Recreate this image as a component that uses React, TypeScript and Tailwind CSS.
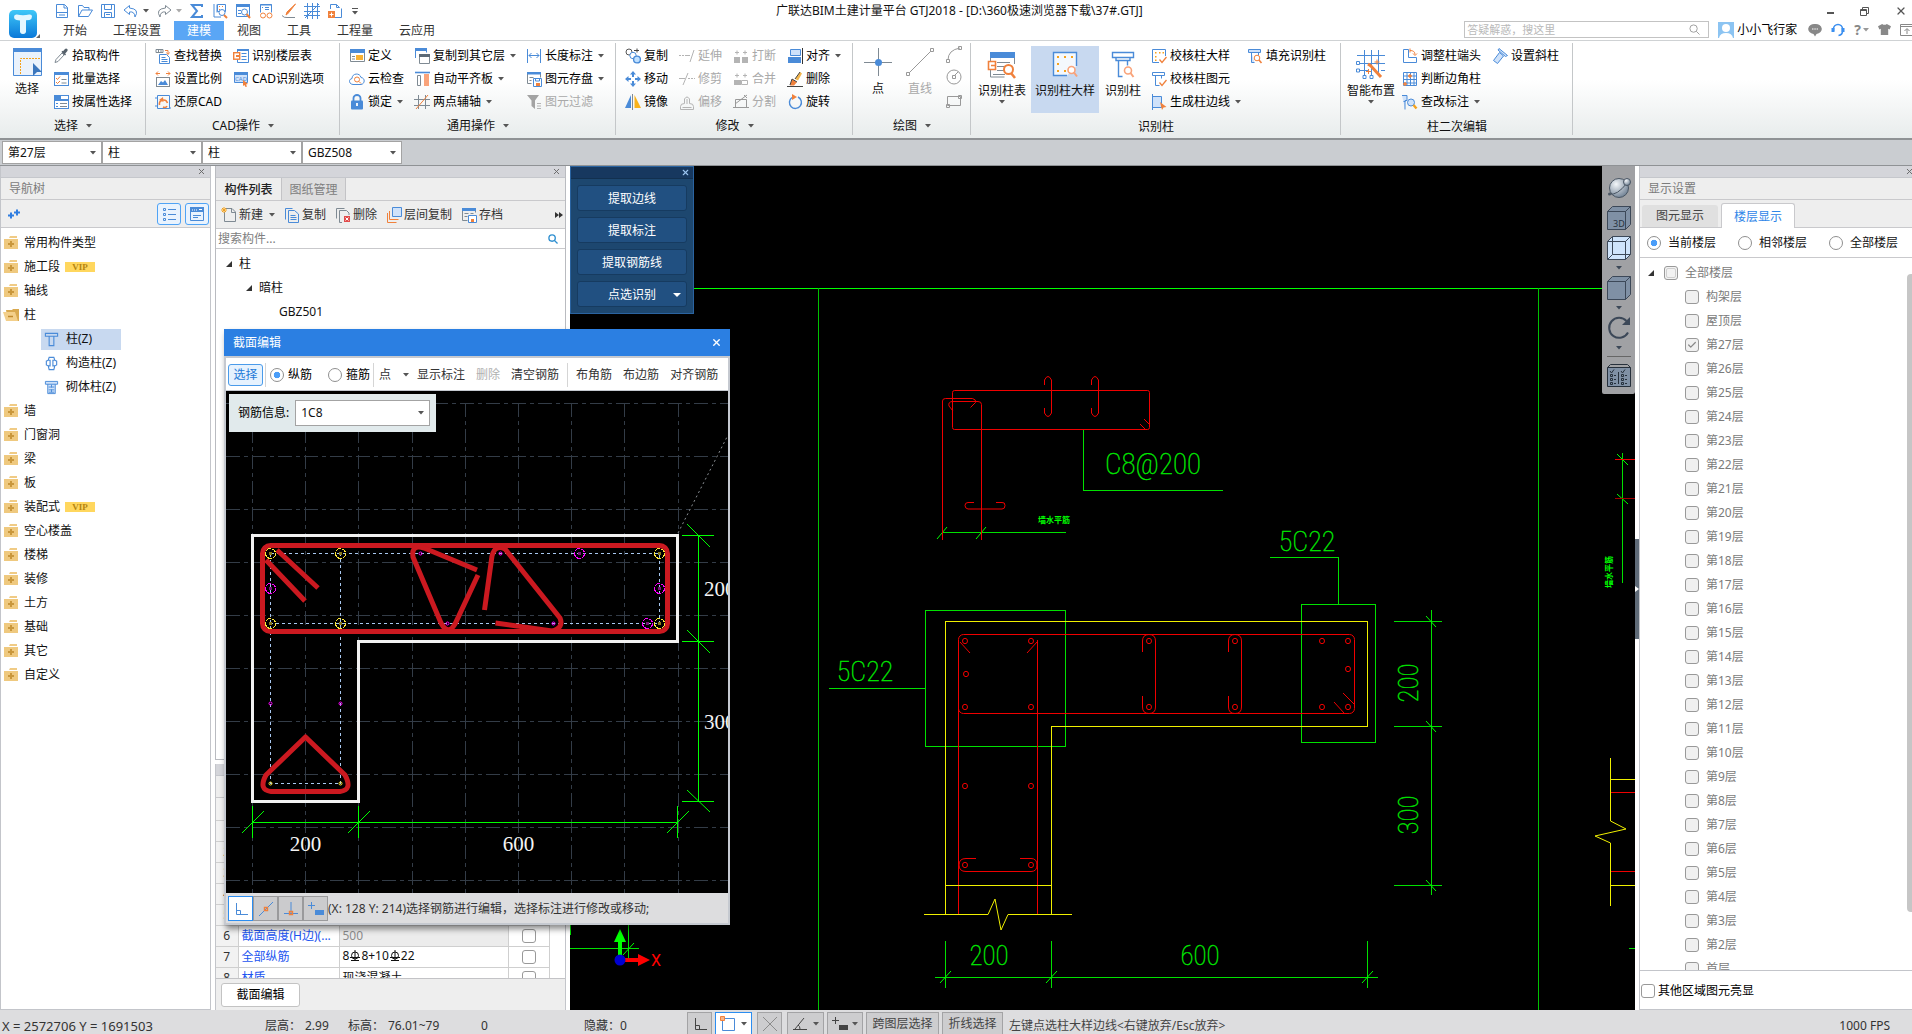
import type { ReactNode } from "react";
import { Check, X } from "lucide-react";

const B = "#4a8bd8";
const O = "#f0813c";
const G = "#7f8a93";
const D = "#b4b4b4";
const LB = "#cfe2fa";

/* 16x16 glyphs of the ribbon and the tool bars */
const glyphs: Record<string, ReactNode> = {
  pick: (
    <>
      <path d="M2 14.5l1-3 6-6.5 2 2-6 6.5z" stroke={G} fill="#fff" />
      <path d="M8.5 4l3.5 3.5 1-1-.8-1 2-2.2a1.5 1.5 0 0 0-2.2-2.2L10 3.300l-.8-.5z" fill="#56616b" />
    </>
  ),
  batch: (
    <>
      <rect x="1.500" y="1.500" width="14" height="13" stroke={B} fill="#fff" />
      <path d="M1 1h15v3H1z" fill={B} />
      <path d="M3 7l1.500 1.500L7 5.500M3 11l1.500 1.500L7 10" stroke={O} />
      <path d="M8.500 8.500h5M8.500 12h5" stroke={G} />
    </>
  ),
  attr: (
    <>
      <rect x="1.500" y="1.500" width="14" height="13" stroke={B} fill="#fff" />
      <path d="M1 1h7v4h8v2H1z" fill={B} />
      <path d="M7 9.500h7M7 12.500h7" stroke={G} />
      <path d="M3 9h2v1H3zM3 12h2v1H3z" fill={B} />
    </>
  ),
  find: (
    <>
      <path d="M1 1.500h7v3H1zM3.500 1.500v3M6 1.500v3" stroke={G} />
      <path d="M10 2.500h3v3M11.500 4.500l1.500 2 1.500-2" stroke={O} />
      <path d="M4.500 6.500h7l3 3v6h-10zM6.500 9.500h4M6.500 11.500h6M6.500 13.500h6" stroke={B} />
    </>
  ),
  scale: (
    <>
      <path d="M1 2.500h4M3 .5l-2 2 2 2M15 2.500h-4M13 .5l2 2-2 2" stroke={O} />
      <rect x="1.500" y="6.500" width="13" height="9" stroke={G} fill="#fff" />
      <path d="M3 14l3-4 2 1.500L10 9l3 5z" fill={B} />
    </>
  ),
  restore: (
    <>
      <path d="M2.500 1.500h12v13h-12zM0 4h2M0 12h2M14 14h2" stroke={B} />
      <path d="M4.500 11c-1-5 6-7 8-2M12 12c-1 2-3 1.500-4 1" stroke={O} strokeWidth="1.600" />
      <path d="M8 3L4 6l4.500 2z" fill={O} />
    </>
  ),
  floors: (
    <>
      <path d="M4.500 1.500h11v13h-11zM8.500 5.500h5M8.500 8.500h5M8.500 11.500h5" stroke={B} />
      <path d="M4 1h12v2H4z" fill={B} />
      <rect x=".7" y="4.700" width="6" height="6.500" stroke={O} strokeWidth="1.400" fill="#fff" />
      <path d="M3 7h3v2H3z" fill={O} />
    </>
  ),
  cadopt: (
    <>
      <path d="M1.500 2.500h13v9h-13z" stroke={B} fill={LB} />
      <path d="M1 1h14v3H1z" fill={B} />
      <text x="2" y="10" fontSize="6" fill={B} stroke="none">CAD</text>
      <path d="M10 9l5 4-2 .5 1 2-1.500.5-1-2-1.500 1z" fill={O} />
    </>
  ),
  define: (
    <>
      <path d="M1.500 1.500h14v12h-14z" stroke={G} fill="#fff" />
      <path d="M1 1h15v4H1z" fill={B} />
      <path d="M7 7h7v5H7z" fill="#f9b233" />
      <path d="M3 8.500h3M3 11h3" stroke={G} />
    </>
  ),
  cloud: (
    <>
      <path d="M4 13.500C-.5 13-.5 8 3 7.500 3 2 11 1.500 12 6.500c4.500.5 4 6.500 0 7z" stroke={B} />
      <circle cx="8" cy="8.500" r="2.500" stroke={O} />
      <path d="M10 10.500l2 2" stroke={O} />
    </>
  ),
  lock: (
    <>
      <path d="M4.500 7V4a3.500 3 0 0 1 7 0v3" stroke={B} strokeWidth="1.800" />
      <rect x="2" y="6.500" width="12" height="9" rx="1" fill={B} />
      <path d="M8 9v3" stroke="#fff" strokeWidth="1.800" />
    </>
  ),
  copyto: (
    <>
      <path d="M1.500 10V.5h11v4" stroke={B} />
      <path d="M1 0h12v3H1z" fill={B} />
      <path d="M5.500 6.500h10v9h-10z" stroke={G} fill="#fff" />
      <path d="M5 6h11v3H5z" fill="#5d6a76" />
    </>
  ),
  slab: (
    <>
      <path d="M1 1.500h15" stroke={B} strokeWidth="1.600" />
      <path d="M3.500 4.500h3v10h-3z" stroke={G} />
      <path d="M10 3h5v12h-5z" fill="#f9a37a" />
    </>
  ),
  axis: (
    <>
      <path d="M0 5.500h16M0 11.500h16M4.500 1v14M11.500 1v14" stroke={G} />
      <path d="M2 15L14 1" stroke={O} />
    </>
  ),
  length: <path d="M1.500 1v14M14.500 1v14M3 7.500h10M5.500 5L3 7.500 5.500 10M10.500 5L13 7.500 10.500 10" stroke={B} />,
  saveElem: (
    <>
      <path d="M1.500 1.500h13v5M1.500 1.500v11h4M3.500 6.500h4M3.500 9.500h2" stroke={G} />
      <path d="M1 1h14v2.500H1z" fill={B} />
      <path d="M7.500 7.500h8v8h-8zM9.500 7.500v2.500h4V7.500" stroke={B} />
      <path d="M10 12h4v3h-4z" fill={O} />
    </>
  ),
  filter: (
    <>
      <path d="M1 1h12L9 6.500V15l-3.500-3V6.500z" fill="#a3a3a3" />
      <path d="M11 9.500h4M11 12h4M11 14.500h4" stroke={D} />
    </>
  ),
  copy: (
    <>
      <circle cx="4" cy="4" r="3" stroke="#555" />
      <path d="M9 2.500h5M12 .5v4" stroke="#444" />
      <circle cx="8" cy="7.500" r="3.200" stroke={B} fill="#fff" />
      <circle cx="12" cy="11.500" r="3.400" stroke={B} fill="#bfe0ff" strokeWidth="1.400" />
    </>
  ),
  move: (
    <path
      d="M8 0l3 3.500H9V6H7V3.500H5zM8 16l3-3.500H9V10H7v2.500H5zM0 8l3.500-3v2H6v2H3.500v2zM16 8l-3.500-3v2H10v2h2.500v2z"
      fill={B}
    />
  ),
  mirror: (
    <>
      <path d="M6 1v13H0z" fill={B} />
      <path d="M7.500 0v16" stroke={G} />
      <path d="M9.500 1v13H16z" fill="#f9b21a" />
    </>
  ),
  extend: <path d="M0 7.500h2M3 7.500h2M6 7.500h5M11 14L15 2" stroke={D} />,
  trim: <path d="M0 7.500h6M4 14L9 2M9 7.500h2M12 7.500h2M15 7.500h1" stroke={D} />,
  offset: <path d="M1.500 15.500v-3q0-3 4-3V5q2.500-4 5 0v4.500q4 0 4 3v3zM3.500 13.500h9M8 5v5" stroke={D} />,
  breakUp: (
    <>
      <path d="M1 9h6v6H1zM9 9h6v6H9z" fill={D} />
      <path d="M2 4.500h4M4 2.500v4M10 4.500h4M12 2.500v4" stroke={D} />
    </>
  ),
  merge: (
    <>
      <path d="M1 9h7v5H1z" fill={D} />
      <path d="M8.500 9.500h6v4h-6zM2 4.500h4M4 2.500v4M10 4.500h4M12 2.500v4" stroke={D} />
    </>
  ),
  split: <path d="M2.500 5.500h11v8h-11zM0 13.500h16M2 10L14 1M11 1l3 3" stroke="#999" />,
  align: (
    <>
      <path d="M3.500 1.500h10v6h-10z" stroke={B} fill={LB} />
      <path d="M1 9h13v6H1z" fill={B} />
      <path d="M15.500 0v16" stroke="#333" />
    </>
  ),
  erase: (
    <>
      <path d="M8 8l5-7 2 1.500-4 7z" fill="#f4b64c" />
      <path d="M5 8l5 3-3 3.500H3z" fill={O} />
      <path d="M8 8l5-7M5 8l5 3M0 15.500h16M3 14l2-6" stroke="#444" />
    </>
  ),
  rotate: (
    <>
      <path d="M5 3.500a6 6 0 1 0 6-.5" stroke={B} strokeWidth="1.400" />
      <path d="M5 0l5 3-5 3z" fill={O} />
    </>
  ),
  chkSample: (
    <>
      <path d="M8 14.500H1.500v-13h13V8" stroke={B} />
      <path d="M4 4h1.500v1.500H4zM8 4h1.500v1.500H8zM11.500 4H13v1.500h-1.500zM4 8h1.500v1.500H4zM4 11.500h1.500V13H4z" fill="#f5a21c" />
      <path d="M8.500 11.500l2.500 3L15.500 9" stroke={O} strokeWidth="1.300" />
    </>
  ),
  chkElem: (
    <>
      <path d="M1.500 1.500h12v3h-12zM4.500 4.500v10h4M10.500 4.500v3" stroke={B} />
      <path d="M8.500 11.500l2.500 3L15.500 9" stroke={O} strokeWidth="1.300" />
    </>
  ),
  edge: (
    <>
      <path d="M1.500 0v16M1.500 2.500h9v11h-9" stroke={B} fill={LB} />
      <path d="M9 8l6.500 5-3 .5L11 16z" fill={O} />
    </>
  ),
  fillRec: (
    <>
      <path d="M1.500 1.500h12v3h-12zM4.500 4.500v10h3M11.500 4.500v3" stroke={B} fill={LB} />
      <circle cx="10" cy="10" r="2.800" stroke={O} fill="#fff" />
      <path d="M12 12l2.500 3" stroke={O} strokeWidth="1.600" />
    </>
  ),
  endHead: (
    <>
      <path d="M1.500 1.500h5v8h8v5h-13z" stroke={B} fill="#fff" />
      <path d="M8 2.500q5 0 5 4M8 .5v4M11 5.500l2 2 2-2" stroke={O} />
    </>
  ),
  corner: (
    <>
      <path d="M1.500 1.500h13v13h-13zM5 1.500v13M8.500 1.500v13M12 1.500v13M1.500 5h13M1.500 8.500h13M1.500 12h13" stroke={B} />
      <path d="M8 3v4M6 5h4M3 11v4M1 13h4" stroke={O} strokeWidth="1.400" />
    </>
  ),
  chkDim: (
    <>
      <path d="M0 1.500h5v5H3v9M1.500 7.500h2" stroke={B} fill={LB} />
      <circle cx="9" cy="8.500" r="3.500" stroke={B} fill={LB} />
      <path d="M11.500 11l3 3.500" stroke="#f5a21c" strokeWidth="2.400" />
    </>
  ),
  slant: <path d="M7 .5l8.500 7-2 1L6 2zM7.500 4.500l4 3.500-6 7.500-4-3z" stroke={B} fill={LB} />,
  /* quick access */
  qNew: <path d="M2.500 1.500h8l3 3v10h-11zM10 1.500v3.500h3.500M2.500 9.500h11M5 12h6" stroke={B} />,
  qOpen: <path d="M1.500 13.500v-11h4l1.500 2h5v2.500M1.500 13.500l3.500-6.500h10.500l-4 6.500z" stroke={B} />,
  qSave: <path d="M1.500 1.500h13v13h-13zM4.500 1.500v5h7v-5M4.500 14.500v-5h7v5M6 11.500h4" stroke={B} />,
  qUndo: <path d="M6.500 2.500L1 7l5.500 4.500V9q5-1 5.500 5 5-8-5.500-9z" stroke={B} />,
  qRedo: <path d="M9.500 2.500L15 7l-5.500 4.500V9q-5-1-5.500 5-5-8 5.500-9z" stroke={G} />,
  qSum: <path d="M13 4V2H3l5 6-5 6h10v-2" stroke={B} strokeWidth="2" />,
  qCalc: (
    <>
      <path d="M2 1v13h7M5.500 1.500h8v7h-8zM5 1.500v8" stroke={B} />
      <path d="M7 3h1v1H7zM10 3h1v1h-1zM7 6h1v1H7z" fill={O} />
      <circle cx="10" cy="9.500" r="3" stroke={B} fill="#fff" />
      <path d="M12 12l3 3" stroke={O} strokeWidth="2" />
    </>
  ),
  qView: (
    <>
      <path d="M1.500 1.500h13v12h-13zM3 7.500h3M3 10.500h3" stroke={B} />
      <path d="M1 1h14v3H1z" fill={B} />
      <circle cx="9.500" cy="9" r="3" stroke={B} fill="#fff" />
      <path d="M11.500 11l3.500 4" stroke={O} strokeWidth="2" />
    </>
  ),
  qReport: (
    <>
      <path d="M2.500 9.500v-8h11v8M7 4.500h4M7 6.500h4M4 4.500h1" stroke={B} />
      <path d="M2 1h12v2H2z" fill={B} opacity=".5" />
      <circle cx="5" cy="12.500" r="2.500" stroke={O} />
      <circle cx="11.500" cy="12.500" r="2.500" stroke={O} />
    </>
  ),
  qBrush: (
    <>
      <path d="M14.500 1L9 8l-2.500 3L5 12l1-3z" stroke={O} fill={O} />
      <path d="M1 12.500q2 2.500 5 2h8" stroke={G} />
    </>
  ),
  qGrid: <path d="M3.500 0v16M8.500 0v16M13.500 0v16M0 3.500h16M0 8.500h16M0 12.500h16M1 15L15 1" stroke={B} />,
  qPlus: (
    <>
      <path d="M3.500 6V1.500h6l3 3M8 14.500h6.500v-9M9.500 1.500v3h3" stroke={B} />
      <path d="M1 8h7v7H1z" fill={O} />
      <path d="M2.500 11.500h4M4.500 9.500v4" stroke="#fff" />
    </>
  ),
  /* component list */
  cNew: (
    <>
      <path d="M4 1.500h7l3.500 3.500v9.500H3.500V5M10.500 1.500v4h4" stroke={G} />
      <path d="M3 0v6M0 3h6M1 1l4 4M5 1L1 5" stroke="#f5a21c" />
    </>
  ),
  cCopy: <path d="M1.500 12.500v-11h7M4.500 3.500h6l4 3.500v8.500h-10zM6.500 8.500h5M6.500 10.500h6M6.500 12.500h6" stroke={B} />,
  cDel: (
    <>
      <path d="M1.500 11.500v-10h8M7 15.500H4.500v-12h7l2.500 2.500v2" stroke={G} />
      <path d="M9 9h6v6H9z" fill="#e14b4b" />
      <path d="M10.500 10.500l3 3M13.500 10.500l-3 3" stroke="#fff" />
    </>
  ),
  cLayer: (
    <>
      <path d="M1.500 6v9.500h9" stroke={O} />
      <path d="M3.500 4v8.500h9" stroke={O} />
      <path d="M6.500.5h9v9h-9z" stroke={B} fill={LB} />
    </>
  ),
  cArch: (
    <>
      <path d="M1.500 13.500v-12h13v4M1.500 13.500h5M3.500 6.500h4M3.500 9.500h3M9.500 6.500h3" stroke={G} />
      <path d="M1 1h14v3H1z" fill={B} />
      <path d="M7.500 8.500h8v7h-8z" stroke={B} fill="#fff" />
      <path d="M10 12h3v3h-3z" fill={O} />
    </>
  ),
  /* tree */
  column: <path d="M1.500 1.500h13v3h-13zM4.500 4.500h7M5.500 4.500v10h5v-10" stroke={B} strokeWidth="1.200" />,
  tieCol: <path d="M5.500 1.500h5l1 3 2 1v4l-2 1-1 4h-5l-1-4-2-1v-4l2-1zM4.500 4.500h2v6h-2M11.500 4.500h-2v6h2" stroke={B} strokeWidth="1.200" />,
  brickCol: <path d="M1.500 1.500h13v3h-13zM4 4.500v10h8v-10M5 7.500h6M5 10.500h6M5 13h6M8 5v3M8 10v3" stroke={B} fill={LB} />,
  /* snap modes */
  ortho: <path d="M3.500 2v11.500H15M3.500 9.500h4v4" stroke="currentColor" />,
  snapMid: (
    <>
      <path d="M1 15L15 1" stroke="currentColor" />
      <path d="M6.500 6.500h3v3h-3z" stroke={O} strokeWidth="1.400" />
    </>
  ),
  snapFoot: (
    <>
      <path d="M8 1v11M1 12.500h14" stroke="currentColor" />
      <path d="M6.500 10.500h3v3h-3z" stroke={O} strokeWidth="1.400" />
    </>
  ),
  snapAdd: (
    <>
      <path d="M0 4.500h7M3.500 1v7" stroke="currentColor" />
      <path d="M7 9h9v5H7z" fill="currentColor" />
    </>
  ),
  rectSel: (
    <>
      <path d="M2.500 2.500h12v12h-12z" stroke={B} fill="#fff" />
      <path d="M.5.5h4v4h-4z" stroke={O} fill="#f9b486" />
    </>
  ),
  crossSel: <path d="M1 1l14 14M15 1L1 15" stroke="#8b8b8b" />,
  angleSel: <path d="M1 13.500h14M3 13L12 2M8 13q0-3-2-4" stroke="currentColor" />,
};

function Glyph({ name, className = "size-4" }: { name: string; className?: string }) {
  return (
    <svg viewBox="0 0 16 16" fill="none" className={`shrink-0 ${className}`} aria-hidden="true">
      {glyphs[name]}
    </svg>
  );
}

function Caret({ className = "text-[#555]" }: { className?: string }) {
  return (
    <svg viewBox="0 0 6 4" className={`w-[6px] h-[4px] shrink-0 ${className}`} aria-hidden="true">
      <path d="M0 0h6L3 3.500z" fill="currentColor" />
    </svg>
  );
}

type Tool = { icon: string; label: string; arrow?: boolean; off?: boolean };

function ToolButton({ icon, label, arrow, off }: Tool) {
  return (
    <button
      disabled={off}
      className="flex h-[23px] items-center gap-[3px] whitespace-nowrap text-black disabled:text-[#a9a9a9]"
    >
      <Glyph name={icon} />
      <span>{label}</span>
      {arrow && <span className="flex pl-[2px]"><Caret /></span>}
    </button>
  );
}

function ToolColumn({ tools }: { tools: Tool[] }) {
  return (
    <div className="flex flex-col items-start">
      {tools.map((t) => (
        <ToolButton key={t.label} {...t} />
      ))}
    </div>
  );
}

function RibbonGroup({ label, arrow, width, gap = "gap-[11px]", children }: { label: string; arrow?: boolean; width: string; gap?: string; children: ReactNode }) {
  return (
    <section className={`relative flex shrink-0 flex-col ${width}`}>
      <div className={`flex h-[72px] items-start pt-[3px] pl-[9px] ${gap}`}>{children}</div>
      <div className={`flex h-[25px] items-center justify-center gap-2 ${arrow ? "" : "pt-[3px]"}`}>
        <span>{label}</span>
        {arrow && <Caret />}
      </div>
      <div className="absolute top-[2px] right-0 bottom-[3px] w-px bg-[#c4c7c9]" />
    </section>
  );
}

function BigButton({ label, icon, width, arrow, active, off }: { label: string; icon: ReactNode; width: string; arrow?: boolean; active?: boolean; off?: boolean }) {
  return (
    <button
      disabled={off}
      className={`flex h-[67px] shrink-0 flex-col items-center pt-[3px] whitespace-nowrap disabled:text-[#a9a9a9] ${width} ${active ? "bg-[#c8d9f0]" : ""}`}
    >
      <svg viewBox="0 0 30 30" fill="none" className="size-[30px]" aria-hidden="true">
        {icon}
      </svg>
      <span className="pt-[3px] leading-[18px]">{label}</span>
      {arrow && <Caret />}
    </button>
  );
}

const columnHead = <path d="M4.500 3.500h21v5h-21zM8 8.500h14v3H8zM10.500 11.500v16h4M19.500 11.500v5" stroke={B} strokeWidth="1.400" />;

function Ribbon() {
  return (
    <div className="flex h-[99px] shrink-0 overflow-hidden border-b-2 border-[#8f9295] bg-linear-to-b from-white from-40% to-[#e8ecec]">
      <RibbonGroup label="选择" arrow width="w-[146px]">
        <div className="flex">
          <BigButton
            label="选择"
            width="w-[36px]"
            icon={
              <>
                <path d="M1.500 1.500h28v27h-28z" stroke={B} fill="#eaf2fc" />
                <path d="M1 1h29v4H1z" fill={B} />
                <path d="M8.500 27V11.500H28" stroke="#f5a21c" strokeDasharray="2 1" />
                <path d="M21 16l9 9h-5l-4 4z" fill="#3b76bd" />
              </>
            }
          />
          <div className="pl-2">
            <ToolColumn tools={[{ icon: "pick", label: "拾取构件" }, { icon: "batch", label: "批量选择" }, { icon: "attr", label: "按属性选择" }]} />
          </div>
        </div>
      </RibbonGroup>
      <RibbonGroup label="CAD操作" arrow width="w-[194px]">
        <ToolColumn tools={[{ icon: "find", label: "查找替换" }, { icon: "scale", label: "设置比例" }, { icon: "restore", label: "还原CAD" }]} />
        <ToolColumn tools={[{ icon: "floors", label: "识别楼层表" }, { icon: "cadopt", label: "CAD识别选项" }]} />
      </RibbonGroup>
      <RibbonGroup label="通用操作" arrow width="w-[276px]" gap="gap-[10px]">
        <ToolColumn tools={[{ icon: "define", label: "定义" }, { icon: "cloud", label: "云检查" }, { icon: "lock", label: "锁定", arrow: true }]} />
        <ToolColumn tools={[{ icon: "copyto", label: "复制到其它层", arrow: true }, { icon: "slab", label: "自动平齐板", arrow: true }, { icon: "axis", label: "两点辅轴", arrow: true }]} />
        <ToolColumn tools={[{ icon: "length", label: "长度标注", arrow: true }, { icon: "saveElem", label: "图元存盘", arrow: true }, { icon: "filter", label: "图元过滤", off: true }]} />
      </RibbonGroup>
      <RibbonGroup label="修改" arrow width="w-[237px]">
        <ToolColumn tools={[{ icon: "copy", label: "复制" }, { icon: "move", label: "移动" }, { icon: "mirror", label: "镜像" }]} />
        <ToolColumn tools={[{ icon: "extend", label: "延伸", off: true }, { icon: "trim", label: "修剪", off: true }, { icon: "offset", label: "偏移", off: true }]} />
        <ToolColumn tools={[{ icon: "breakUp", label: "打断", off: true }, { icon: "merge", label: "合并", off: true }, { icon: "split", label: "分割", off: true }]} />
        <ToolColumn tools={[{ icon: "align", label: "对齐", arrow: true }, { icon: "erase", label: "删除" }, { icon: "rotate", label: "旋转" }]} />
      </RibbonGroup>
      <RibbonGroup label="绘图" arrow width="w-[118px]">
        <BigButton
          label="点"
          width="w-[32px]"
          icon={
            <>
              <path d="M15.500 1v28M1 15.500h28" stroke={G} />
              <circle cx="15.500" cy="15.500" r="3.500" fill={B} />
            </>
          }
        />
        <BigButton
          label="直线"
          width="w-[30px]"
          off
          icon={
            <>
              <path d="M3 27L27 3" stroke="#999" />
              <path d="M1.500 25.500h3v3h-3zM25.500 1.500h3v3h-3z" stroke="#999" fill="#fff" />
            </>
          }
        />
        <svg viewBox="0 0 16 64" fill="none" stroke="#999" className="h-[64px] w-4" aria-hidden="true">
          <path d="M2 16q0-10 12-12M.5 15.500h3v3h-3zM12.500 2.500h3v3h-3z" />
          <circle cx="8" cy="33" r="7" />
          <path d="M6.500 31.500h3v3h-3zM9 31l3-3M1.500 52.500h13v9h-13zM.5 60.500h3v3h-3zM12.500 51.500h3v3h-3z" />
        </svg>
      </RibbonGroup>
      <RibbonGroup label="识别柱" width="w-[370px]" gap="gap-[6px]">
        <div className="flex gap-[2px] pt-[2px] -ml-[5px]">
          <BigButton
            label="识别柱表"
            width="w-[54px]"
            arrow
            icon={
              <>
                <path d="M3 3h25v6H3z" fill={B} />
                <path d="M3.500 9v19h14M27.500 9v6M10 13.500h13M10 17.500h8M10 21.500h8M6 25.500h12" stroke={G} />
                <path d="M1.500 12.500h7v8h-7zM4 16.500h5" stroke={O} strokeWidth="1.600" fill="#fff" />
                <circle cx="21.500" cy="20.500" r="4.500" stroke={O} strokeWidth="2" fill="#fff" />
                <path d="M24 24l4 5" stroke={O} strokeWidth="2.500" />
              </>
            }
          />
          <BigButton
            label="识别柱大样"
            width="w-[68px]"
            active
            icon={
              <>
                <path d="M17 26.500H3.500v-23h23V17" stroke={B} strokeWidth="1.400" fill="#f4f8fd" />
                <path d="M7 7h2v2H7zM14 7h2v2h-2zM21 7h2v2h-2zM7 14h2v2H7zM7 21h2v2H7zM14 21h2v2h-2z" fill="#f5a21c" />
                <circle cx="21.500" cy="21" r="3.500" stroke="#f9a37a" strokeWidth="1.600" fill="#fff" />
                <path d="M24 23.500l3 4" stroke="#f9a37a" strokeWidth="2" />
              </>
            }
          />
          <BigButton
            label="识别柱"
            width="w-[44px]"
            icon={
              <>
                {columnHead}
                <circle cx="20" cy="21.500" r="3.500" stroke="#f9a37a" strokeWidth="1.600" fill="#fff" />
                <path d="M22.500 24l3 4" stroke="#f9a37a" strokeWidth="2" />
              </>
            }
          />
        </div>
        <ToolColumn tools={[{ icon: "chkSample", label: "校核柱大样" }, { icon: "chkElem", label: "校核柱图元" }, { icon: "edge", label: "生成柱边线", arrow: true }]} />
        <ToolColumn tools={[{ icon: "fillRec", label: "填充识别柱" }]} />
      </RibbonGroup>
      <RibbonGroup label="柱二次编辑" width="w-[232px]">
        <div className="pt-[2px] -ml-[4px]">
          <BigButton
            label="智能布置"
            width="w-[50px]"
            arrow
            icon={
              <>
                <path d="M8.500 1v25M15.500 1v25M22.500 1v25M1 6.500h28M3 14.500h26M3 21.500h10M25 21.500h4" stroke={B} />
                <path d="M.5 12.500h3v3h-3zM.5 20h3v3h-3zM7 26.500h3v3H7zM14 26.500h3v3h-3z" stroke={B} fill="#fff" />
                <path d="M12 15l3 2M14 16l11 12" stroke={O} strokeWidth="3" />
                <path d="M10 22.500h5M12.500 20v5M21 10.500v5M18.500 13h5" stroke={O} />
              </>
            }
          />
        </div>
        <div className="flex gap-[11px] -ml-[5px]">
          <ToolColumn tools={[{ icon: "endHead", label: "调整柱端头" }, { icon: "corner", label: "判断边角柱" }, { icon: "chkDim", label: "查改标注", arrow: true }]} />
          <ToolColumn tools={[{ icon: "slant", label: "设置斜柱" }]} />
        </div>
      </RibbonGroup>
    </div>
  );
}

function TitleBar() {
  const tabs = ["开始", "工程设置", "建模", "视图", "工具", "工程量", "云应用"];
  return (
    <header className="flex h-[41px] shrink-0 border-b border-[#cfd2d4] bg-white">
      <button aria-label="主菜单" className="relative w-[46px] shrink-0 pt-[8px] pl-[9px]">
        <svg viewBox="0 0 28 28" className="size-[28px]" aria-hidden="true">
          <defs>
            <linearGradient id="logo" x1="0" y1="0" x2="0" y2="1">
              <stop offset="0" stopColor="#3fc8f8" />
              <stop offset="1" stopColor="#0a78d8" />
            </linearGradient>
          </defs>
          <rect width="28" height="28" rx="5" fill="url(#logo)" />
          <path d="M5 7q0-3 3-2.500 6 1.500 12 0 3-.5 3 2T20.500 10q-2 0-3.500.2V20q.5 4-3 4t-3-4v-9.600Q9.500 10 7.500 10 5 9.500 5 7z" fill="#e4f7ff" />
        </svg>
        <svg viewBox="0 0 4 4" className="absolute right-[6px] bottom-[2px] size-[4px]" aria-hidden="true">
          <path d="M4 0v4H0z" fill="#666" />
        </svg>
      </button>
      <div className="flex min-w-0 flex-1 flex-col">
        <div className="grid h-[22px] grid-cols-[724fr_auto_763fr] items-center">
          <div className="flex items-center pl-2">
            <div className="flex items-center gap-[7px]">
              {["qNew", "qOpen", "qSave"].map((n) => (
                <button key={n} aria-label={n}><Glyph name={n} /></button>
              ))}
              <button aria-label="撤销" className="flex items-center gap-1"><Glyph name="qUndo" /><Caret /></button>
              <button aria-label="恢复" className="flex items-center gap-1"><Glyph name="qRedo" /><Caret className="text-[#aaa]" /></button>
              {["qSum", "qCalc", "qView", "qReport", "qBrush", "qGrid", "qPlus"].map((n) => (
                <button key={n} aria-label={n}><Glyph name={n} /></button>
              ))}
              <button aria-label="自定义快速访问" className="flex flex-col items-center gap-[2px] pl-[2px]">
                <span className="h-px w-[6px] bg-[#555]" />
                <Caret />
              </button>
            </div>
          </div>
          <h1 className="whitespace-nowrap">广联达BIM土建计量平台 GTJ2018 - [D:\360极速浏览器下载\37#.GTJ]</h1>
          <div className="flex items-center justify-end gap-[26px] pr-[5px] text-[#555]">
            <button aria-label="最小化" className="flex h-3 w-[7px] items-end pb-[3px]"><span className="h-[2px] w-full bg-[#555]" /></button>
            <button aria-label="还原">
              <svg viewBox="0 0 9 9" fill="none" stroke="#555" className="size-[9px]"><path d="M2.500 2.500v-2h6v6h-2M.5 2.500h6v6h-6zM.5 3.500h6" /></svg>
            </button>
            <button aria-label="关闭"><X className="size-[12px]" strokeWidth={2.500} /></button>
          </div>
        </div>
        <div className="flex h-[18px] flex-1 items-end">
          <nav className="flex flex-1 pl-1">
            {tabs.map((t) => (
              <button key={t} className={`h-[19px] px-[13px] ${t === "建模" ? "bg-[#5aa6f5] text-white" : "text-[#333]"}`}>
                {t}
              </button>
            ))}
          </nav>
          <div className="flex items-center gap-[9px] pb-[2px]">
            <label className="flex h-[17px] w-[245px] items-center border border-[#c3c3c3] px-[2px]">
              <input placeholder="答疑解惑，搜这里" aria-label="搜索" className="min-w-0 flex-1 text-[11px] leading-[14px] outline-none placeholder:text-[#b9b9b9]" />
              <svg viewBox="0 0 12 12" fill="none" stroke="#999" className="mr-[6px] size-[11px]"><circle cx="5" cy="5" r="4" /><path d="M8 8l3.500 3.500" /></svg>
            </label>
            <div className="flex items-center gap-[3px]">
              <svg viewBox="0 0 16 16" className="size-4" aria-hidden="true">
                <path d="M0 0h16v16H0z" fill="#8cc4f2" />
                <circle cx="8" cy="6" r="4" fill="#fff" />
                <path d="M1 16q1-5 7-5t7 5z" fill="#fff" />
              </svg>
              <span className="whitespace-nowrap text-black">小小飞行家</span>
            </div>
            <div className="flex h-4 items-center gap-[9px] pl-[2px]">
              <svg viewBox="0 0 14 14" className="size-[14px]"><path d="M7 1a6 5 0 0 1 1.500 10L7 13.500 5.500 11A6 5 0 0 1 7 1z" fill="#888" /><path d="M4 6h1.500M6.300 6h1.500M8.600 6H10" stroke="#fff" /></svg>
              <svg viewBox="0 0 14 14" fill="none" className="size-[14px]"><path d="M2.500 8V6a4.500 4.500 0 0 1 9 0v2q0 4-4 4.500" stroke="#3b8ff0" strokeWidth="1.600" /><path d="M2 5v4M12 5v4" stroke="#3b8ff0" strokeWidth="3" /></svg>
              <button aria-label="帮助" className="flex items-center gap-[2px] text-[14px] leading-[16px] font-bold text-[#888]">?<Caret className="text-[#999]" /></button>
              <svg viewBox="0 0 14 14" className="size-[13px]"><path d="M4.500 1q2.500 2 5 0L14 3.500 12.500 7l-1.500-.7V13H3V6.300L1.500 7 0 3.500z" fill="#888" /></svg>
              <svg viewBox="0 0 12 14" fill="none" stroke="#888" className="h-[14px] w-[12px]"><path d="M12 1.500H.5v11H12M0 3.500h12M7 11V6M4.500 8L7 5.500 9.500 8" /></svg>
            </div>
          </div>
        </div>
      </div>
    </header>
  );
}

function Combo({ label, value, className }: { label: string; value: string; className: string }) {
  return (
    <span className={`relative block ${className}`}>
      <select aria-label={label} className="size-full appearance-none border border-[#a3a3a3] bg-white pl-[5px] text-[#111] outline-none">
        <option>{value}</option>
      </select>
      <span className="pointer-events-none absolute inset-y-0 right-[6px] flex items-center"><Caret /></span>
    </span>
  );
}

function PanelStrip() {
  return (
    <div className="flex h-[12px] shrink-0 items-center justify-end border-b border-[#c5c7cc] bg-[#d4d5da] pr-1">
      <button aria-label="关闭面板"><X className="size-[9px] text-[#666]" strokeWidth={2.500} /></button>
    </div>
  );
}

function Folder({ open }: { open?: boolean }) {
  return (
    <svg viewBox="0 0 16 14" className="h-[14px] w-[16px] shrink-0" aria-hidden="true">
      {open ? (
        <>
          <path d="M3 2h6l1-1h6v12H5z" fill="#d9a94f" />
          <path d="M0 4h12l3 9H3z" fill="#f3cf8a" />
          <path d="M5 8.500h5" stroke="#c0892c" strokeWidth="1.500" />
        </>
      ) : (
        <>
          <path d="M7 0h7v2H6z" fill="#f0cb85" />
          <path d="M1 3h14v10H1z" fill="#efc97f" />
          <path d="M5 8h6M8 5v6" stroke="#c9973c" strokeWidth="2" />
        </>
      )}
    </svg>
  );
}

const navItems: { label: string; vip?: boolean; child?: string; open?: boolean; active?: boolean }[] = [
  { label: "常用构件类型" },
  { label: "施工段", vip: true },
  { label: "轴线" },
  { label: "柱", open: true },
  { label: "柱(Z)", child: "column", active: true },
  { label: "构造柱(Z)", child: "tieCol" },
  { label: "砌体柱(Z)", child: "brickCol" },
  { label: "墙" },
  { label: "门窗洞" },
  { label: "梁" },
  { label: "板" },
  { label: "装配式", vip: true },
  { label: "空心楼盖" },
  { label: "楼梯" },
  { label: "装修" },
  { label: "土方" },
  { label: "基础" },
  { label: "其它" },
  { label: "自定义" },
];

function NavPanel() {
  return (
    <aside className="flex w-[211px] shrink-0 flex-col border border-t-0 border-[#c3c5ca] bg-white">
      <PanelStrip />
      <h2 className="flex h-[22px] shrink-0 items-center border-b border-[#c9c9cc] bg-[#eeeeee] pl-2 text-[#7b7b7b]">导航树</h2>
      <div className="flex h-[28px] shrink-0 items-center gap-1 border-b border-[#c9c9cc] bg-[#eeeeee] pr-px pl-[7px]">
        <svg viewBox="0 0 12 10" className="h-[10px] w-[12px]"><path d="M0 6.500h6M3 3.500v6M6 3.500h6M9 .5v6" stroke="#2f7de0" strokeWidth="2" /></svg>
        <span className="flex-1" />
        <button aria-label="列表" className="flex h-[22px] w-[24px] items-center justify-center rounded-[3px] border border-[#4fa3f5] bg-[#e9f3fe]">
          <svg viewBox="0 0 14 14" fill="none" stroke={B} className="size-[14px]"><path d="M1.500 1.500h2v2h-2zM1.500 6.500h2v2h-2zM1.500 11.500h2v2h-2zM6 2.500h8M6 7.500h8M6 12.500h8" /></svg>
        </button>
        <button aria-label="图标" className="flex h-[22px] w-[24px] items-center justify-center rounded-[3px] border border-[#4fa3f5] bg-[#e9f3fe]">
          <svg viewBox="0 0 14 14" fill="none" stroke={B} className="size-[14px]"><path d="M.5.5h13v13H.5zM3 8.500h8M3 10.500h5" /><path d="M0 0h14v5H0z" fill={B} stroke="none" /><path d="M2 3h1M4 3h1M6 3h1M9 2.500h3" stroke="#fff" /></svg>
        </button>
      </div>
      <ul className="flex-1 overflow-hidden pt-[3px]">
        {navItems.map((n) => (
          <li key={n.label} className="flex h-6 items-center">
            {n.child ? (
              <span className={`ml-[40px] flex h-[21px] w-[80px] items-center gap-[7px] pl-[3px] ${n.active ? "bg-[#c8d9f0]" : ""}`}>
                <Glyph name={n.child} className="size-[15px]" />
                <span className="whitespace-nowrap">{n.label}</span>
              </span>
            ) : (
              <span className="flex items-center gap-[5px] pl-[2px]">
                <Folder open={n.open} />
                <span>{n.label}</span>
                {n.vip && <span className="flex h-[10px] w-[30px] items-center justify-center bg-[#ffd75e] font-['Liberation_Serif',serif] text-[9px] font-bold text-[#b58410]">VIP</span>}
              </span>
            )}
          </li>
        ))}
      </ul>
    </aside>
  );
}

function TreeArrow() {
  return <svg viewBox="0 0 6 6" className="size-[6px] shrink-0"><path d="M6 0v6H0z" fill="#333" /></svg>;
}

function Rebar() {
  return (
    <svg viewBox="0 0 10 12" fill="none" stroke="#111" className="mx-px mb-[3px] inline-block h-[12px] w-[10px]" role="img" aria-label="三级钢">
      <circle cx="5" cy="5.500" r="3.500" />
      <path d="M5 0v10M0 7.500h10M1 10.500h8" />
    </svg>
  );
}

const box = "size-[14px] shrink-0 appearance-none rounded-[3px] border border-[#999]";

function ComponentPanel() {
  const rows: { no: number; name: string; value: ReactNode; off?: boolean }[] = [
    { no: 1, name: "", value: "" },
    { no: 2, name: "", value: "" },
    { no: 3, name: "", value: "" },
    { no: 4, name: "", value: "" },
    { no: 5, name: "", value: "" },
    { no: 6, name: "截面高度(H边)(...", value: "500", off: true },
    { no: 7, name: "全部纵筋", value: <>8<Rebar />8+10<Rebar />22</> },
    { no: 8, name: "材质", value: "现浇混凝土" },
  ];
  return (
    <aside className="flex w-[351px] shrink-0 flex-col">
      <div className="flex min-h-0 flex-1 flex-col border border-t-0 border-[#b9bbc0] bg-white">
        <PanelStrip />
        <div className="flex h-[23px] shrink-0 border-b border-[#c9c9cc] bg-[#eeeeee]">
          <button className="w-[65px] pt-px font-medium text-[#222]">构件列表</button>
          <button className="w-[65px] border-x border-[#c3c3c6] bg-[#dededf] pt-px text-[#808080]">图纸管理</button>
        </div>
        <div className="flex h-[28px] shrink-0 items-center gap-[9px] border-b border-[#c9c9cc] bg-[#eeeeee] pr-[2px] pl-[5px] text-[#333]">
          {[
            ["cNew", "新建"],
            ["cCopy", "复制"],
            ["cDel", "删除"],
            ["cLayer", "层间复制"],
            ["cArch", "存档"],
          ].map(([icon, label]) => (
            <button key={label} className="flex items-center gap-[2px] whitespace-nowrap">
              <Glyph name={icon} />
              {label}
              {label === "新建" && <span className="pl-[4px]"><Caret /></span>}
            </button>
          ))}
          <button aria-label="更多" className="ml-auto"><svg viewBox="0 0 8 6" className="h-[6px] w-[8px]"><path d="M0 0l4 3-4 3zM4 0l4 3-4 3z" fill="#333" /></svg></button>
        </div>
        <label className="flex h-[20px] shrink-0 items-center border-b border-[#c9c9cc] pr-[7px] pl-[2px]">
          <input placeholder="搜索构件..." aria-label="搜索构件" className="min-w-0 flex-1 outline-none placeholder:text-[#808080]" />
          <svg viewBox="0 0 11 11" fill="none" stroke="#2f8fd0" strokeWidth="1.500" className="size-[10px]"><circle cx="4.500" cy="4.500" r="3.500" /><path d="M7 7l3.500 3.500" /></svg>
        </label>
        <ul className="overflow-hidden pt-[3px]">
          <li className="flex h-6 items-center gap-[7px] pl-[10px]"><TreeArrow />柱</li>
          <li className="flex h-6 items-center gap-[7px] pl-[30px]"><TreeArrow />暗柱</li>
          <li className="flex h-6 items-center pl-[63px]">GBZ501</li>
        </ul>
      </div>
      <div className="mt-1 flex h-[246px] shrink-0 flex-col overflow-hidden border-x border-[#c3c5ca] bg-[#eeeeee]">
        <div className="h-[12px] shrink-0 border-b border-[#c5c7cc] bg-[#d4d5da]" />
        <div className="h-[22px] shrink-0 border-b border-[#c9c9cc]" />
        <div className="h-[181px] overflow-hidden border-b border-[#c3c3c6] bg-white">
          <table className="w-[334px] table-fixed border-collapse">
            <colgroup>
              <col className="w-[22px]" />
              <col className="w-[101px]" />
              <col />
              <col className="w-[41px]" />
            </colgroup>
            <thead>
              <tr className="h-[22px]">
                <th className="border border-t-0 border-l-0 border-[#cfcfcf] bg-[#f2f2f2]" />
                <th className="border border-t-0 border-[#cfcfcf] bg-[#f2f2f2]" />
                <th className="border border-t-0 border-[#cfcfcf] bg-[#f2f2f2]" />
                <th className="border border-t-0 border-[#cfcfcf] bg-[#f2f2f2]" />
              </tr>
            </thead>
            <tbody>
              {rows.map((r) => (
                <tr key={r.no} className="h-[21px]">
                  <td className="border border-l-0 border-[#cfcfcf] bg-[#f2f2f2] p-0 text-center text-[#333]">{r.no}</td>
                  <td className="overflow-hidden border border-[#cfcfcf] p-0 pl-[3px] whitespace-nowrap text-[#1c55f0]">{r.name}</td>
                  <td className={`border border-[#cfcfcf] p-0 pl-[3px] whitespace-nowrap ${r.off ? "bg-[#ececec] text-[#8c8c8c]" : ""}`}>{r.value}</td>
                  <td className="border border-[#cfcfcf] p-0">
                    <input type="checkbox" aria-label={`附加 ${r.no}`} className={`mx-auto block bg-white ${box}`} />
                  </td>
                </tr>
              ))}
            </tbody>
          </table>
        </div>
        <div className="flex flex-1 items-center pl-[5px]">
          <button className="h-[24px] w-[79px] rounded-[3px] border border-[#c3c3c3] bg-white pt-px text-black">截面编辑</button>
        </div>
      </div>
    </aside>
  );
}

const cadFont = "'Liberation Sans Narrow', 'Roboto Condensed', Roboto, sans-serif";
const oval = [
  [965, 641], [1031, 641], [966, 674], [965, 707], [1031, 707], [1149, 641], [1149, 707], [1235, 641], [1235, 707],
  [1322, 641], [1348, 641], [1348, 669], [1322, 707], [1348, 707], [965, 786], [1031, 786], [965, 865], [1031, 865],
];

function Drawing() {
  return (
    <svg viewBox="570 166 1065 844" preserveAspectRatio="xMinYMin slice" fill="none" className="absolute inset-0 size-full" aria-label="CAD图纸">
      <g stroke="#00e000" shapeRendering="crispEdges">
        <path d="M694 288.500H1602" stroke="#0f0" />
        <path d="M818.500 288V1010M1538.500 288V1010" stroke="#00c000" />
        <path d="M1083.500 430V490.500H1223M942 532.500H1066M1270 557.500H1338.500V604" />
        <path d="M1301.500 604.500H1375.500V742.500H1301.500zM925.500 610.500H1065.500V746.500H925.500zM829 688.500H925" />
        <path d="M935 977.500H1378M945.500 941V988M1051.500 941V988M1367.500 941V988" />
        <path d="M1431.500 610V895M1394 621.500H1442M1394 726.500H1442M1394 885.500H1442" />
        <path d="M1622.500 453V583M570 948.500H639M628.500 924V958M1629 948.500H1635M570.500 924V935" />
      </g>
      <g stroke="#0f0">
        <path d="M937 539L947 527M976 539L986 527M940 983L951 971M1046 983L1057 971M1362 983L1373 971" />
        <path d="M1426 616L1436 627M1426 721L1436 732M1426 880L1436 891M1617 454L1628 465M1617 494L1628 504M623 955L634 943" />
      </g>
      <g stroke="#f00000">
        <rect x="952.500" y="390.500" width="197" height="39" rx="2" />
        <path d="M1044.500 385v-5q3.500-7 7 0v33q-3.500 7-7 0v-5M1091.500 385v-5q3.500-7 7 0v33q-3.500 7-7 0v-5" />
        <path d="M942.500 540V401q0-2.500 3-2.500h27q4 1 3 4l-5 5M953 411l-4-5q-1-4 3-4.500h26q3.500 0 3.500 3V540" />
        <path d="M974 502.500h-6q-3 0-3 3t3 3.500h34q3 0 3-3.500t-3-3h-6M1140 424l5 5M1144 419l5 5" />
        <path d="M1615 459.500H1635M1610 792.500H1635M1610 871.500H1635" />
        <path d="M1615 498.500H1635" stroke="#a00000" />
        <rect x="958.500" y="634.500" width="396" height="79" rx="5" />
        <path d="M958.500 640V914M1037.500 640V914M960 642l10 11M1037 642l-10 11" />
        <path d="M1142.500 652v-11q0-6.500 6.500-6.500t6.500 6.500v66q0 6.500-6.500 6.500t-6.500-6.500v-11" />
        <path d="M1228.500 652v-11q0-6.500 6.500-6.500t6.500 6.500v66q0 6.500-6.500 6.500t-6.500-6.500v-11" />
        <path d="M1334 702l10 11M1343 693l11 11M976 858.500h-10q-7 0-7 6.500t7 6.500h65q6 0 6-6.500t-6-6.500h-11" />
        {oval.map(([cx, cy]) => (
          <ellipse key={`${cx}-${cy}`} cx={cx} cy={cy} rx="2.500" ry="2.700" />
        ))}
      </g>
      <g stroke="#f0f000">
        <path d="M945.500 914V621.500H1367.500V726.500H1051.500V914M945.500 885.500H1051.500" shapeRendering="crispEdges" />
        <path d="M924 914.500H988L995 899L1001 930L1008 914.500H1072M1610.500 758V821L1626 829L1595 836L1610.500 843V906M1610 779.500H1635M1610 885.500H1635" />
      </g>
      <g fill="#0f0" stroke="#00e000" strokeWidth="0.400" fontFamily={cadFont} fontWeight="100" textAnchor="middle">
        <text x="1153" y="474" fontSize="29">C8@200</text>
        <text x="1307" y="551" fontSize="28">5C22</text>
        <text x="865" y="681" fontSize="28">5C22</text>
        <text x="989" y="965" fontSize="27">200</text>
        <text x="1200" y="965" fontSize="27">600</text>
        <text x="0" y="0" fontSize="27" transform="translate(1418 683) rotate(-90)">200</text>
        <text x="0" y="0" fontSize="27" transform="translate(1418 815) rotate(-90)">300</text>
      </g>
      <g fill="#0f0" fontFamily="'Noto Sans CJK SC', sans-serif" fontSize="8" fontWeight="700" textAnchor="middle">
        <text x="1054" y="523">墙水平筋</text>
        <text x="0" y="0" transform="translate(1612 572) rotate(-90)">墙水平筋</text>
      </g>
      {/* UCS icon */}
      <path d="M620 958V940" stroke="#0f0" strokeWidth="4" />
      <path d="M620 929l6 13h-12z" fill="#0f0" />
      <path d="M622 960h18" stroke="#f00" strokeWidth="4" />
      <path d="M650 960l-12-6v12z" fill="#f00" />
      <circle cx="620" cy="960" r="5.500" fill="#0000d0" />
      <text x="651" y="966" fontSize="16" fontFamily="Roboto, sans-serif" fill="#f00">X</text>
    </svg>
  );
}

function ExtractTools() {
  return (
    <div className="absolute top-0 left-0 w-[124px] border border-[#2a63a0] bg-[#1d476f]">
      <div className="flex h-[12px] items-center justify-end border-b border-[#12304f] bg-[#17385f] pr-[3px]">
        <button aria-label="关闭"><X className="size-[9px] text-[#9cc4ee]" strokeWidth={3} /></button>
      </div>
      <div className="flex flex-col gap-[6px] p-[6px]">
        {["提取边线", "提取标注", "提取钢筋线", "点选识别"].map((t) => (
          <button key={t} className="relative h-[26px] rounded-[3px] border border-[#163b60] bg-[#215081] pt-[2px] text-white">
            {t}
            {t === "点选识别" && (
              <svg viewBox="0 0 8 4" className="absolute top-[11px] right-[5px] h-[4px] w-[8px]"><path d="M0 0h8L4 4z" fill="#fff" /></svg>
            )}
          </button>
        ))}
      </div>
    </div>
  );
}

function Cube({ fill, children }: { fill: string; children?: ReactNode }) {
  return (
    <svg viewBox="0 0 24 24" fill="none" stroke="#3c4858" className="size-6" aria-hidden="true">
      <path d="M.5 5.500h18v18H.5z" fill={fill} />
      <path d="M.5 5.500l5-5h18l-5 5zM18.500 5.500l5-5v18l-5 5z" fill={fill} />
      {children}
    </svg>
  );
}

function ViewTools() {
  return (
    <div className="absolute top-0 right-0 flex w-[33px] flex-col items-center gap-[6px] rounded-b-[2px] bg-[#a0a1a4] pt-[10px] pb-[7px]">
      <button aria-label="动态观察">
        <svg viewBox="0 0 24 24" className="size-6">
          <defs>
            <radialGradient id="ball" cx="0.35" cy="0.3" r="0.8">
              <stop offset="0" stopColor="#f4f7fa" />
              <stop offset="1" stopColor="#66788c" />
            </radialGradient>
          </defs>
          <circle cx="12" cy="12" r="9.500" fill="url(#ball)" stroke="#4a5664" />
          <path d="M2 18q8 2 18-11" stroke="#4a5664" fill="none" />
          <circle cx="20" cy="6" r="3.500" fill="url(#ball)" stroke="#4a5664" />
          <circle cx="2.500" cy="18" r="1.500" fill="#4a5664" />
        </svg>
      </button>
      <button aria-label="三维">
        <Cube fill="#7f90a5"><text x="6" y="21" fontSize="9" fill="#26303c" stroke="none">3D</text></Cube>
      </button>
      <button aria-label="俯视"><Cube fill="#cfe4fb"><path d="M5.500.5v18h18M.5 23.500l5-5" /></Cube></button>
      <Caret className="text-[#3c4858]" />
      <button aria-label="实体"><Cube fill="#7f90a5" /></button>
      <Caret className="text-[#3c4858]" />
      <button aria-label="旋转">
        <svg viewBox="0 0 24 24" fill="none" className="size-6"><path d="M21 16.500A10 10 0 1 1 19.500 5" stroke="#3c4858" strokeWidth="2" /><path d="M23 1v8h-8z" fill="#3c4858" /></svg>
      </button>
      <Caret className="text-[#3c4858]" />
      <span className="h-px w-6 bg-[#666]" />
      <button aria-label="显示设置">
        <svg viewBox="0 0 24 24" fill="none" stroke="#26303c" className="size-6">
          <path d="M.5 4.500h23v19H.5z" fill="#7f90a5" />
          <path d="M.5 4.500l3-3h17l3 3M11.500 9v12M3 8l1.500 2L7 6.500M14 8l1.500 2L18 6.500M3.500 11.500h2v2h-2zM3.500 15.500h2v2h-2zM3.500 19.500h2v2h-2zM14.500 11.500h2v2h-2zM14.500 15.500h2v2h-2zM14.500 19.500h2v2h-2zM7 12.500h2M7 16.500h2M7 20.500h2M18 12.500h2M18 16.500h2M18 20.500h2" />
        </svg>
      </button>
    </div>
  );
}

const radio =
  "size-[14px] shrink-0 appearance-none rounded-full border border-[#8f8f8f] bg-white checked:bg-[radial-gradient(circle,#4a9df8_37%,#fff_42%)]";

const floors = ["构架层", "屋顶层", ...Array.from({ length: 26 }, (_, i) => `第${27 - i}层`), "首层"];

function DisplayPanel() {
  return (
    <aside className="flex w-[273px] shrink-0 flex-col overflow-hidden border-b border-l border-[#c3c5ca] bg-white">
      <div className="-mr-[6px] shrink-0"><PanelStrip /></div>
      <h2 className="flex h-[22px] shrink-0 items-center border-b border-[#c9c9cc] bg-[#eeeeee] pl-2 text-[#7b7b7b]">显示设置</h2>
      <div className="flex h-[28px] shrink-0 items-end gap-[3px] border-b border-[#c9c9cc] bg-[#eeeeee] pl-[2px]">
        <button className="h-[22px] w-[76px] rounded-t-[3px] bg-[#e0e0e0] text-[#444]">图元显示</button>
        <button className="-mb-px h-[25px] w-[74px] rounded-t-[3px] border border-b-0 border-[#c9c9cc] bg-white pt-[2px] text-[#2f86e8]">楼层显示</button>
      </div>
      <div className="flex h-[30px] shrink-0 items-center gap-[22px] border-b border-[#c9c9cc] pl-[7px]">
        {["当前楼层", "相邻楼层", "全部楼层"].map((t, i) => (
          <label key={t} className="flex items-center gap-[7px] whitespace-nowrap">
            <input type="radio" name="floorScope" defaultChecked={i === 0} className={radio} />
            {t}
          </label>
        ))}
      </div>
      <div className="relative min-h-0 flex-1 overflow-hidden border-b border-[#c3c5ca] pt-[3px] text-[#7b7b7b]">
        <div className="flex h-6 items-center gap-[10px] pl-[8px]">
          <TreeArrow />
          <label className="flex items-center gap-[7px]">
            <span className="relative flex">
              <input type="checkbox" disabled className={`bg-[#f2f2f2] ${box}`} />
              <span className="pointer-events-none absolute inset-[2px] rounded-[2px] border border-[#cfcfcf]" />
            </span>
            全部楼层
          </label>
        </div>
        {floors.map((f) => (
          <label key={f} className="flex h-6 items-center gap-[7px] pl-[45px]">
            <span className="relative flex">
              <input type="checkbox" disabled defaultChecked={f === "第27层"} className={`bg-[#f0f0f0] ${box}`} />
              {f === "第27层" && <Check className="pointer-events-none absolute inset-[2px] size-[10px] text-[#888]" strokeWidth={3} />}
            </span>
            {f}
          </label>
        ))}
        <div className="absolute top-[16px] right-0 bottom-[58px] w-[5px] rounded-l-[4px] bg-[#c6c6c6]" />
      </div>
      <label className="flex h-[38px] shrink-0 items-center gap-[3px] pt-px pl-px text-black">
        <input type="checkbox" className={`bg-white ${box}`} />
        其他区域图元亮显
      </label>
    </aside>
  );
}

const gridX = [252, 305, 358, 412, 465, 518, 571, 624, 678];
const gridY = [403, 456, 509, 562, 615, 668, 721, 774, 827, 880];
const cornerBars = [[270, 553], [340, 553], [659, 553], [270, 623], [340, 623], [659, 623]];
const sideBars = [[579, 553], [270, 588], [659, 588], [647, 623]];
const dots = [[420, 553], [500, 553], [447, 623], [553, 623], [270, 703], [340, 703]];

function SectionDrawing() {
  return (
    <svg viewBox="226 391 502 502" preserveAspectRatio="xMinYMin slice" fill="none" className="absolute inset-0 size-full" aria-label="截面图">
      <g stroke="#333c47" strokeDasharray="14 4 4 4" shapeRendering="crispEdges">
        {gridX.map((x) => <path key={x} d={`M${x + 0.5} 403V893`} />)}
        {gridY.map((y) => <path key={y} d={`M226 ${y + 0.5}H728`} />)}
      </g>
      <path d="M678 533L728 435" stroke="#8a8f94" strokeDasharray="2 3" />
      <path d="M252.500 535.500H677.500V641.500H358.500V801.500H252.500z" stroke="#f2f2f2" strokeWidth="3" />
      <path d="M270.500 553.500H659.500V623.500H270.500M270.500 553.500V783.500H340.500V553.500" stroke="#a8c8f0" strokeDasharray="3 3" shapeRendering="crispEdges" />
      <g stroke="#cb1920" strokeWidth="5">
        <rect x="262.500" y="545.500" width="405" height="86" rx="8" />
        <path d="M277 550L318 588M266 560L305 601" />
        <path d="M477 570L424 548Q411 544 413 557L441 623Q448 636 455 624L478 575" />
        <path d="M484.500 610L492 556Q495 544 505 549L560 618Q564 628 552 631L495.500 623" />
        <path d="M305.500 737L266 775Q258 790 271 791.500H340Q353 790 345 775z" strokeLinejoin="round" />
      </g>
      <g stroke="#ffe838" strokeDasharray="5 1" shapeRendering="crispEdges">
        {cornerBars.map(([x, y]) => <circle key={`${x}-${y}`} cx={x + 0.5} cy={y + 0.5} r="5" />)}
      </g>
      <g stroke="#ff00ff" strokeDasharray="5 1" shapeRendering="crispEdges">
        {sideBars.map(([x, y]) => <circle key={`${x}-${y}`} cx={x + 0.5} cy={y + 0.5} r="5" />)}
      </g>
      <g fill="#8a7a18">{cornerBars.map(([x, y]) => <path key={`${x}-${y}`} d={`M${x - 1} ${y - 1}h3v3h-3z`} />)}</g>
      <g fill="#7a107a">{sideBars.map(([x, y]) => <path key={`${x}-${y}`} d={`M${x - 1} ${y - 1}h3v3h-3z`} />)}</g>
      <g stroke="#ff00ff">{dots.map(([x, y]) => <circle key={`${x}-${y}`} cx={x + 0.5} cy={y + 0.5} r="1.500" />)}</g>
      <g stroke="#ffe838"><circle cx="270.500" cy="783.500" r="1.500" /><circle cx="340.500" cy="783.500" r="1.500" /></g>
      <g stroke="#0f0">
        <path d="M252.500 822.500H678M252.500 806V838M358.500 806V838M677.500 806V838M698.500 535.500V801.500M682 535.500H714M682 641.500H714M682 801.500H714" />
        <path d="M242 833L264 811M348 833L370 811M667 833L689 811M687 524L710 547M687 630L710 653M687 790L710 812" />
      </g>
      <g fill="#f4f4f4" fontFamily="'Liberation Serif', serif" fontSize="21">
        <text x="305.500" y="851" textAnchor="middle">200</text>
        <text x="518.500" y="851" textAnchor="middle">600</text>
        <text x="704" y="596">200</text>
        <text x="704" y="729">300</text>
      </g>
    </svg>
  );
}

function SectionDialog() {
  return (
    <div role="dialog" aria-label="截面编辑" className="absolute top-[163px] left-[224px] flex h-[596px] w-[506px] flex-col bg-[#c5c9d0] shadow-[2px_4px_6px_rgba(0,0,0,0.45)]">
      <div className="flex h-[27px] shrink-0 items-center justify-between bg-[#2b7fe2] pr-[8px] pl-[9px] text-white">
        <span>截面编辑</span>
        <button aria-label="关闭"><X className="size-[11px]" strokeWidth={3} /></button>
      </div>
      <div className="mx-[2px] mt-[2px] flex h-[32px] shrink-0 items-center bg-white pt-px pl-[2px] whitespace-nowrap text-[#333]">
        <button className="h-[22px] w-[35px] rounded-[3px] border border-[#4a9bea] bg-[#e6f2fe] text-[#1f7bd8]">选择</button>
        <span className="mr-1 ml-[2px] h-6 w-px bg-[#d5d5d5]" />
        <label className="flex items-center gap-1 text-black"><input type="radio" name="bar" defaultChecked className={radio} />纵筋</label>
        <label className="ml-[16px] flex items-center gap-1 text-black"><input type="radio" name="bar" className={radio} />箍筋</label>
        <span className="ml-[3px] h-6 w-px bg-[#d5d5d5]" />
        <button className="ml-[5px] flex items-center gap-3">点<Caret /></button>
        <button className="ml-[8px]">显示标注</button>
        <button disabled className="ml-[11px] text-[#b0b0b0]">删除</button>
        <button className="ml-[11px]">清空钢筋</button>
        <span className="mx-[8px] h-6 w-px bg-[#d5d5d5]" />
        <button>布角筋</button>
        <button className="ml-[11px]">布边筋</button>
        <button className="ml-[11px]">对齐钢筋</button>
      </div>
      <div className="relative mx-[2px] mt-px flex-1 overflow-hidden bg-black">
        <SectionDrawing />
        <div className="absolute top-[3px] left-[3px] flex h-[38px] w-[207px] items-center gap-[6px] bg-[#e1eaec] pl-[9px] text-black">
          <span className="whitespace-nowrap">钢筋信息:</span>
          <Combo label="钢筋信息" value="1C8" className="h-[26px] w-[135px]" />
        </div>
      </div>
      <div className="mx-[2px] mb-[2px] flex h-[30px] shrink-0 items-center bg-[#dddddf] pt-px pl-[2px] text-[#333]">
        {["ortho", "snapMid", "snapFoot", "snapAdd"].map((g, i) => (
          <button
            key={g}
            aria-label={g}
            className={`flex size-[25px] items-center justify-center border text-[#4a8bd8] ${i === 0 ? "border-[#2b8df0] bg-white" : "border-[#9a9a9c] bg-[#cbcbcd]"}`}
          >
            <Glyph name={g} />
          </button>
        ))}
        <span className="whitespace-nowrap">(X: 128 Y: 214)选择钢筋进行编辑，选择标注进行修改或移动;</span>
      </div>
    </div>
  );
}

function StatusBar() {
  const btn = "flex h-[22px] shrink-0 items-center justify-center border border-b-0 border-[#a3a3a5] bg-[#cdcdcf]";
  return (
    <footer className="flex h-[24px] shrink-0 items-end bg-[#dddddf] text-[#333]">
      <div className="flex h-[17px] w-[687px] shrink-0 items-center whitespace-nowrap">
        <span className="w-[265px] pl-[2px] text-[13px]">X = 2572706 Y = 1691503</span>
        <span className="w-[40px]">层高：</span>
        <span className="w-[43px]">2.99</span>
        <span className="w-[40px]">标高：</span>
        <span className="w-[93px]">76.01~79</span>
        <span className="w-[103px]">0</span>
        <span>隐藏：0</span>
      </div>
      <div className="flex flex-1 items-end gap-[3px] text-[#444]">
        <button aria-label="正交" className={`w-[25px] ${btn}`}><Glyph name="ortho" /></button>
        <button aria-label="框选" className="flex h-[22px] w-[37px] shrink-0 items-center justify-center gap-[5px] border border-b-0 border-[#2b8df0] bg-white"><Glyph name="rectSel" /><Caret /></button>
        <button aria-label="交点" className={`ml-[2px] w-[25px] ${btn}`}><Glyph name="crossSel" /></button>
        <button aria-label="角度" className={`ml-[2px] w-[37px] gap-[5px] ${btn}`}><Glyph name="angleSel" /><Caret /></button>
        <button aria-label="偏移" className={`w-[36px] gap-[4px] ${btn}`}><Glyph name="snapAdd" /><Caret /></button>
        <button className={`w-[73px] ${btn}`}>跨图层选择</button>
        <button className={`w-[61px] ${btn}`}>折线选择</button>
        <span className="flex h-[17px] items-center pl-[3px] whitespace-nowrap">左键点选柱大样边线&lt;右键放弃/Esc放弃&gt;</span>
      </div>
      <span className="flex h-[17px] items-center pr-[22px] whitespace-nowrap">1000 FPS</span>
    </footer>
  );
}

export default function App() {
  return (
    <div lang="zh-CN" className="flex h-screen flex-col overflow-hidden bg-white font-['Noto_Sans','Noto_Sans_CJK_SC',sans-serif] text-[12px] leading-[16px] text-[#111]">
      <TitleBar />
      <Ribbon />
      <div className="flex h-[26px] shrink-0 items-center border-b border-[#8f9295] bg-[#cacdd1] pl-[2px]">
        <Combo label="楼层" value="第27层" className="h-[23px] w-[100px]" />
        <Combo label="构件类别" value="柱" className="h-[23px] w-[100px]" />
        <Combo label="构件类型" value="柱" className="h-[23px] w-[100px]" />
        <Combo label="构件" value="GBZ508" className="h-[23px] w-[100px]" />
      </div>
      <main className="relative flex min-h-0 flex-1 gap-1">
        <NavPanel />
        <ComponentPanel />
        <div className="relative min-w-0 flex-1 overflow-hidden bg-black">
          <Drawing />
          <ExtractTools />
          <ViewTools />
        </div>
        <DisplayPanel />
        {/* splitter grip */}
        <div className="absolute top-[373px] right-[273px] flex h-[100px] w-1 items-center bg-[#5f6b78]">
          <svg viewBox="0 0 4 6" className="h-[6px] w-[4px]"><path d="M0 0l4 3-4 3z" fill="#fff" /></svg>
        </div>
        <SectionDialog />
      </main>
      <StatusBar />
    </div>
  );
}
